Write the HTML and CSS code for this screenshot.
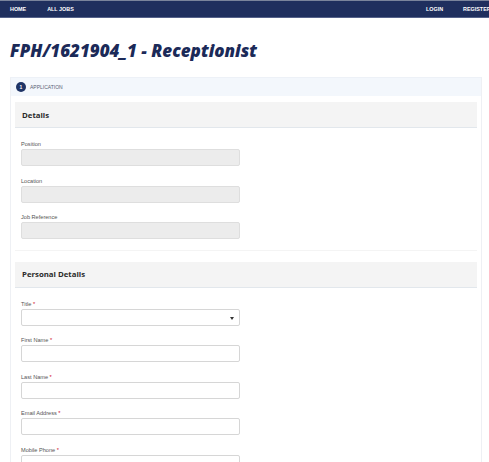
FILE: index.html
```html
<!DOCTYPE html>
<html>
<head>
<meta charset="utf-8">
<link rel="stylesheet" href="styles.css">
</head>
<body>
<nav class="nav">
  <div class="nav-left">
    <a class="nav-link">HOME</a>
    <a class="nav-link">ALL JOBS</a>
  </div>
  <div class="nav-right">
    <a class="nav-link">LOGIN</a>
    <a class="nav-link">REGISTER</a>
  </div>
</nav>
<main class="main">
  <h1 class="title">FPH/1621904_1 - Receptionist</h1>
  <div class="wizard">
    <div class="steps">
      <span class="step-num">1</span>
      <span class="step-label">APPLICATION</span>
    </div>
    <div class="form">
      <section class="section">
        <div class="section-head">Details</div>
        <div class="section-body">
          <div class="field"><label class="label">Position</label><div class="input disabled"></div></div>
          <div class="field"><label class="label">Location</label><div class="input disabled"></div></div>
          <div class="field"><label class="label">Job Reference</label><div class="input disabled"></div></div>
        </div>
      </section>
      <section class="section">
        <div class="section-head">Personal Details</div>
        <div class="section-body">
          <div class="field"><label class="label">Title <span class="req">*</span></label><div class="input select"><span class="caret"></span></div></div>
          <div class="field"><label class="label">First Name <span class="req">*</span></label><div class="input"></div></div>
          <div class="field"><label class="label">Last Name <span class="req">*</span></label><div class="input"></div></div>
          <div class="field"><label class="label">Email Address <span class="req">*</span></label><div class="input"></div></div>
          <div class="field"><label class="label">Mobile Phone <span class="req">*</span></label><div class="input"></div></div>
        </div>
      </section>
    </div>
  </div>
</main>
</body>
</html>
```
FILE: styles.css
```css
* { box-sizing: border-box; }
html, body { margin: 0; padding: 0; background: #fff; }
body { font-family: "Liberation Sans", Arial, sans-serif; overflow: hidden; }

.nav {
  height: 18px;
  background: #1f2f5e;
  border-top: 1px solid #7a849c;
  border-bottom: 1px solid #55628a;
  display: flex;
  justify-content: space-between;
  align-items: center;
}
.nav-left, .nav-right { display: flex; align-items: center; }
.nav-left { padding-left: 10px; gap: 21px; }
.nav-right { gap: 20px; width: 63px; flex-shrink: 0; white-space: nowrap; }
.nav-link {
  color: #fff;
  font-size: 5.4px;
  font-weight: bold;
  line-height: 8px;
}

.main { padding: 0 7px 0 10px; }
.title {
  margin: 24px 0 0 0;
  height: 35px;
  font-family: "Open Sans", sans-serif;
  font-style: italic;
  font-weight: 800;
  font-size: 17px;
  line-height: 17px;
  color: #1b2a58;
}

.wizard {
  border-left: 1px solid #eef0f4;
  border-right: 1px solid #eef0f4;
  width: 472px;
}
.steps {
  height: 19px;
  background: #f3f7fc;
  border-top: 1px solid #edf1f7;
  display: flex;
  align-items: center;
  padding-left: 5px;
  gap: 4px;
}
.step-num {
  width: 10px;
  height: 10px;
  border-radius: 50%;
  background: #1f3466;
  color: #fff;
  font-size: 5px;
  font-weight: bold;
  display: flex;
  align-items: center;
  justify-content: center;
}
.step-label {
  font-size: 5px;
  color: #5a6275;
  line-height: 8px;
}

.form { padding: 6px 4px 0 4px; }
.section { border-bottom: 1px solid #f4f4f4; margin-bottom: 11px; }
.section-head {
  height: 26px;
  background: #f4f4f4;
  border-bottom: 1px solid #e2e7ec;
  display: flex;
  align-items: center;
  padding-left: 7px;
  font-family: "Open Sans", sans-serif;
  font-weight: bold;
  font-size: 7.8px;
  color: #2b2b2b;
}
.section-body { padding: 12px 0 0 6px; }
.field { margin-bottom: 10.5px; }
.label {
  display: block;
  height: 9px;
  font-size: 5.6px;
  line-height: 9px;
  color: #555;
}
.req { color: #d0021b; }
.input {
  width: 219px;
  height: 17px;
  border: 1px solid #d6d6d6;
  border-radius: 2px;
  background: #fff;
  position: relative;
}
.input.disabled { background: #ececec; border-color: #dedede; }
.caret {
  position: absolute;
  right: 5px;
  top: 7px;
  width: 0;
  height: 0;
  border-left: 2.5px solid transparent;
  border-right: 2.5px solid transparent;
  border-top: 3px solid #333;
}
```
